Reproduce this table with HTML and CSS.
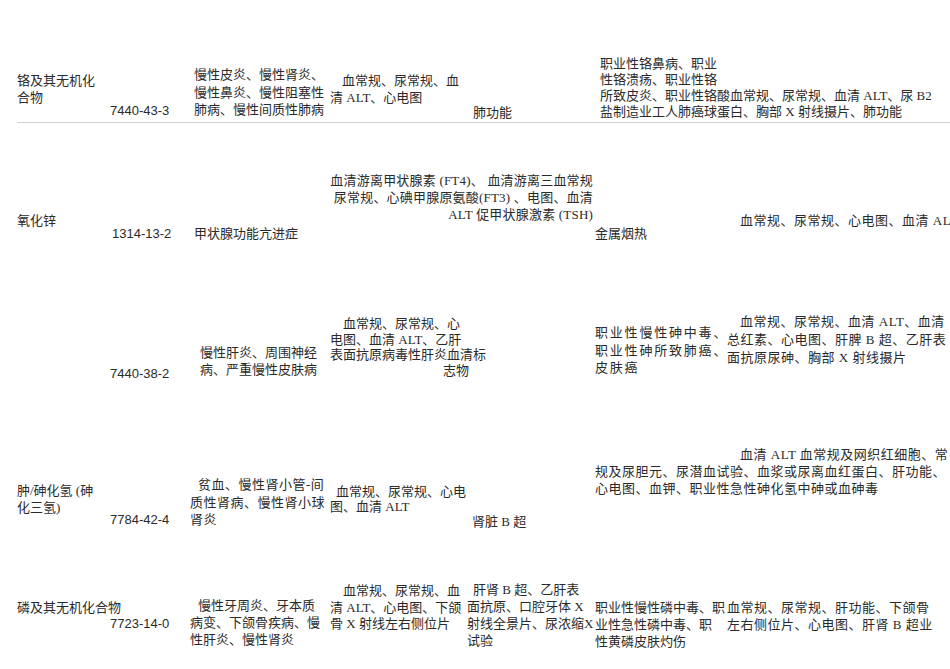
FILE: index.html
```html
<!DOCTYPE html>
<html lang="zh">
<head>
<meta charset="utf-8">
<title>职业健康检查项目</title>
<link rel="stylesheet" href="styles.css">
</head>
<body>
<div class="sheet">
  <div class="row r1">
    <div class="cell c1 lh17"><div>铬及其无机化</div><div>合物</div></div>
    <div class="cell c2 cas lh17"><div>7440-43-3</div></div>
    <div class="cell c3 lh175"><div class="i4">慢性皮炎、慢性肾炎、</div><div class="i4">慢性鼻炎、慢性阻塞性</div><div class="i4">肺病、慢性间质性肺病</div></div>
    <div class="cell c4 lh17"><div class="i12">血常规、尿常规、血</div><div>清 ALT、心电图</div></div>
    <div class="cell c5 lh17"><div class="i6">肺功能</div></div>
    <div class="cell c6 lh16"><div class="i5">职业性铬鼻病、职业</div><div class="i5">性铬溃疡、职业性铬</div><div class="i5">所致皮炎、职业性铬酸血常规、尿常规、血清 ALT、尿 B2</div><div class="i5">盐制造业工人肺癌球蛋白、胸部 X 射线摄片、肺功能</div></div>
  </div>

  <div class="row r2">
    <div class="cell c1 lh17"><div>氧化锌</div></div>
    <div class="cell c2 cas lh17"><div class="i2">1314-13-2</div></div>
    <div class="cell c3 lh17"><div class="i4">甲状腺功能亢进症</div></div>
    <div class="cell c4 lh17"><div>血清游离甲状腺素 (FT4)、 血清游离三血常规</div><div>尿常规、心碘甲腺原氨酸(FT3) 、电图、血清</div><div>ALT 促甲状腺激素 (TSH)</div></div>
    <div class="cell c6 lh17"><div>金属烟热</div></div>
    <div class="cell c7 lh17 semi"><div class="i13">血常规、尿常规、心电图、血清 ALT</div></div>
  </div>

  <div class="row r3">
    <div class="cell c2 cas lh17"><div>7440-38-2</div></div>
    <div class="cell c3 lh17"><div class="i10">慢性肝炎、周围神经</div><div class="i10">病、严重慢性皮肤病</div></div>
    <div class="cell c4 lh155"><div class="i13">血常规、尿常规、心</div><div>电图、血清 ALT、乙肝</div><div>表面抗原病毒性肝炎血清标</div><div class="i113">志物</div></div>
    <div class="cell c6 lh175 wide"><div>职业性慢性砷中毒、</div><div>职业性砷所致肺癌、</div><div>皮肤癌</div></div>
    <div class="cell c7 lh18 semi"><div class="i13">血常规、尿常规、血清 ALT、血清</div><div>总红素、心电图、肝脾 B 超、乙肝表</div><div>面抗原尿砷、胸部 X 射线摄片</div></div>
  </div>

  <div class="row r4">
    <div class="cell c1 lh17"><div>肿/砷化氢 (砷</div><div>化三氢)</div></div>
    <div class="cell c2 cas lh17"><div>7784-42-4</div></div>
    <div class="cell c3 lh175 semi"><div class="i8">贫血、慢性肾小管-间</div><div>质性肾病、慢性肾小球</div><div>肾炎</div></div>
    <div class="cell c4 lh15"><div class="i6">血常规、尿常规、心电</div><div>图、血清 ALT</div></div>
    <div class="cell c5 lh17"><div class="i5">肾脏 B 超</div></div>
    <div class="cell c67 lh17 semi"><div class="i145">血清 ALT 血常规及网织红细胞、常</div><div>规及尿胆元、尿潜血试验、血浆或尿离血红蛋白、肝功能、</div><div>心电图、血钾、职业性急性砷化氢中砷或血砷毒</div></div>
  </div>

  <div class="row r5">
    <div class="cell c1 lh17"><div>磷及其无机化合物</div></div>
    <div class="cell c2 cas lh17"><div>7723-14-0</div></div>
    <div class="cell c3 lh17"><div class="i8">慢性牙周炎、牙本质</div><div>病变、下颌骨疾病、慢</div><div>性肝炎、慢性肾炎</div></div>
    <div class="cell c4 lh165"><div class="i13">血常规、尿常规、血</div><div>清 ALT、心电图、下颌</div><div>骨 X 射线左右侧位片</div></div>
    <div class="cell c5 lh17"><div class="i6">肝肾 B 超、乙肝表</div><div>面抗原、口腔牙体 X</div><div>射线全景片、尿浓缩X</div><div>试验</div></div>
    <div class="cell c6 lh17"><div>职业性慢性磷中毒、职</div><div>业性急性磷中毒、职</div><div>性黄磷皮肤灼伤</div></div>
    <div class="cell c7 lh17 semi"><div>血常规、尿常规、肝功能、下颌骨</div><div>左右侧位片、心电图、肝肾 B 超业</div></div>
  </div>
</div>
</body>
</html>
```

FILE: styles.css
```css
html, body {
  margin: 0;
  padding: 0;
  width: 950px;
  height: 669px;
  overflow: hidden;
  background: #ffffff;
}

.sheet {
  font-family: "Liberation Serif", "Noto Sans CJK SC", serif;
  font-size: 13px;
  color: #2a2a2a;
  padding-left: 17px;
  width: 933px;
  height: 669px;
  overflow: hidden;
}

.row {
  display: grid;
  grid-template-columns: 93px 80px 140px 137px 128px 132px 206px;
  align-items: start;
}

.row > .cell > div {
  white-space: nowrap;
}

.r1 { height: 122px; border-bottom: 1px solid #d2d2d2; }
.r2 { height: 139px; }
.r3 { height: 140px; }
.r4 { height: 143px; }
.r5 { height: 124px; }

.cell { display: grid; }

.c1 { grid-column: 1; }
.c2 { grid-column: 2; }
.c3 { grid-column: 3; }
.c4 { grid-column: 4; }
.c5 { grid-column: 5; }
.c6 { grid-column: 6; }
.c7 { grid-column: 7; }
.c67 { grid-column: 6 / 8; }

.cas { font-family: "Liberation Sans", "Noto Sans CJK SC", sans-serif; }

.lh15 { line-height: 15px; grid-auto-rows: 15px; }
.lh155 { line-height: 15.5px; grid-auto-rows: 15.5px; }
.lh16 { line-height: 16px; grid-auto-rows: 16px; }
.lh165 { line-height: 16.5px; grid-auto-rows: 16.5px; }
.lh17 { line-height: 17px; grid-auto-rows: 17px; }
.lh175 { line-height: 17.5px; grid-auto-rows: 17.5px; }
.lh18 { line-height: 18px; grid-auto-rows: 18px; }

.wide { letter-spacing: 1.8px; }
.semi { letter-spacing: 0.5px; }

.i2 { margin-left: 2px; }
.i4 { margin-left: 4px; }
.i5 { margin-left: 5px; }
.i6 { margin-left: 6px; }
.i8 { margin-left: 8px; }
.i10 { margin-left: 10px; }
.i12 { margin-left: 12px; }
.i13 { margin-left: 13px; }
.i113 { margin-left: 113px; }
.i145 { margin-left: 145px; }

/* row 1 */
.r1 .c1 { padding-top: 72px; }
.r1 .c2 { padding-top: 102px; }
.r1 .c3 { padding-top: 66px; }
.r1 .c4 { padding-top: 72px; }
.r1 .c5 { padding-top: 104px; }
.r1 .c6 { padding-top: 56px; }

/* row 2 */
.r2 .c1 { padding-top: 89px; }
.r2 .c2 { padding-top: 102px; }
.r2 .c3 { padding-top: 102px; }
.r2 .c4 { padding-top: 49px; width: 263px; text-align: right; letter-spacing: 0.2px; }
.r2 .c6 { padding-top: 102px; }
.r2 .c7 { padding-top: 89px; }

/* row 3 */
.r3 .c2 { padding-top: 103px; }
.r3 .c3 { padding-top: 82px; }
.r3 .c4 { padding-top: 54px; }
.r3 .c6 { padding-top: 62px; }
.r3 .c7 { padding-top: 51px; }

/* row 4 */
.r4 .c1 { padding-top: 80px; }
.r4 .c2 { padding-top: 109px; }
.r4 .c3 { padding-top: 74px; }
.r4 .c4 { padding-top: 82px; }
.r4 .c5 { padding-top: 111px; }
.r4 .c67 { padding-top: 44px; }

/* row 5 */
.r5 .c1 { padding-top: 54px; }
.r5 .c2 { padding-top: 70px; }
.r5 .c3 { padding-top: 52px; }
.r5 .c4 { padding-top: 38px; }
.r5 .c5 { padding-top: 36px; }
.r5 .c6 { padding-top: 54px; }
.r5 .c7 { padding-top: 54px; }
```
